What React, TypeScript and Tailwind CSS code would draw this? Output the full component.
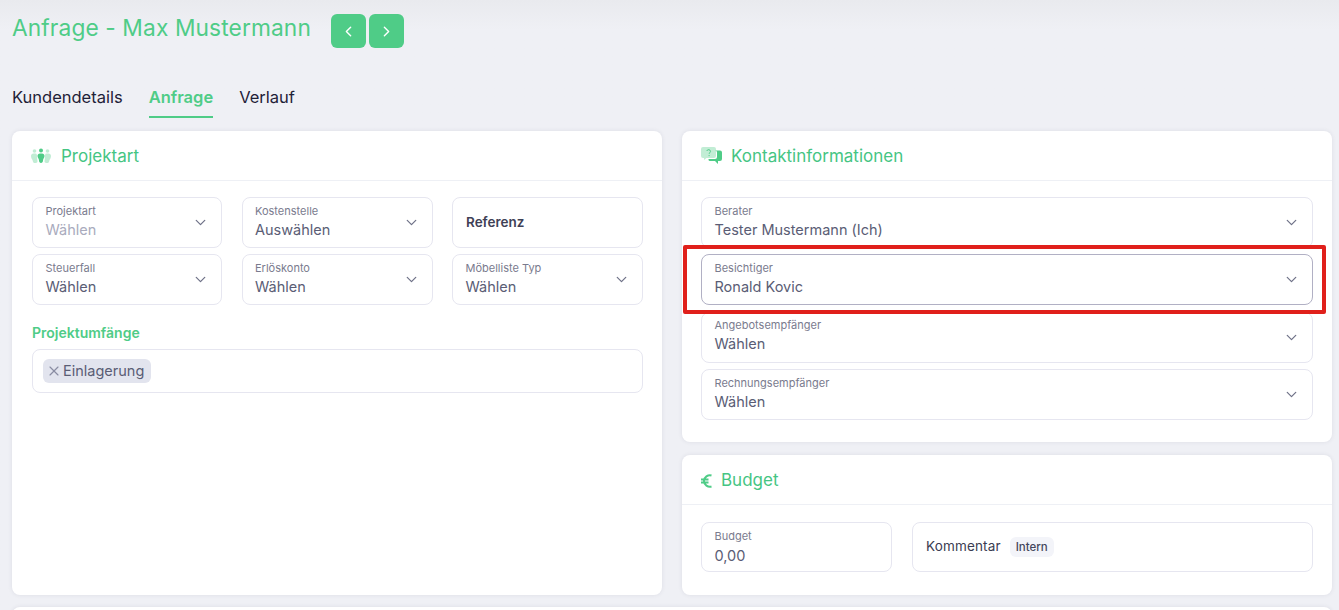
import React from 'react';
import { ChevronDown, ChevronLeft, ChevronRight, X } from 'lucide-react';

const font = { fontFamily: 'Inter, sans-serif' };

const SelectField = ({ label, value, muted, active }: { label: string; value: string; muted?: boolean; active?: boolean }) => (
  <div className={`flex h-[51px] items-center justify-between rounded-lg border bg-white pl-[12.5px] pr-[12px] ${active ? 'border-[#b1b0c4]' : 'border-[#e6e6f0]'}`}>
    <div className="flex -translate-y-[1px] flex-col">
      <span className="text-[11px] leading-[14px] text-[#7a7b8e]">{label}</span>
      <span className={`mt-[2px] text-[14.5px] leading-[20px] ${muted ? 'text-[#a9abbd]' : 'text-[#5a5d75]'}`}>{value}</span>
    </div>
    <ChevronDown size={17} strokeWidth={1.75} className="text-[#6f7288]" />
  </div>
);

const PeopleIcon = () => (
  <svg width="20" height="16" viewBox="0 0 20 16" fill="#4fcc87">
    <g opacity="0.35">
      <circle cx="3.5" cy="3" r="1.8" />
      <circle cx="16.5" cy="3" r="1.8" />
      <path d="M0 8c0-1.5 1-2.500 2.500-2.500h2C6 5.500 6 7 6 9s.5 3 .5 4.500S5 15 3.500 15 2 13 1.500 12 0 10 0 8z" />
      <path d="M20 8c0-1.500-1-2.500-2.500-2.500h-2C14 5.500 14 7 14 9s-.5 3-.5 4.500S15 15 16.500 15s1.500-2 2-3S20 10 20 8z" />
    </g>
    <circle cx="10" cy="2.500" r="2" />
    <path d="M6.500 8c0-1.500 1-2.500 2.500-2.500h2c1.500 0 2.500 1 2.500 2.500 0 2-1.500 2.500-1.500 4.500 0 1.500-.8 2.500-2 2.500s-2-1-2-2.500c0-2-1.500-2.500-1.500-4.500z" />
  </svg>
);

const ChatIcon = () => (
  <svg width="21" height="17" viewBox="0 0 21 17" fill="#4fcc87">
    <path opacity="0.35" d="M2 0h11a2 2 0 0 1 2 2v7a2 2 0 0 1-2 2H5.500L3 13v-2H2a2 2 0 0 1-2-2V2a2 2 0 0 1 2-2z" />
    <path d="M14 3.500h5a2 2 0 0 1 2 2V12a2 2 0 0 1-2 2h-2v3l-3-3H9a1.500 1.500 0 0 1-1.500-1.500V12H14a2 2 0 0 0 2-2V5.500a2 2 0 0 0-2-2z" />
    <path d="M5.800 4a1.900 1.900 0 0 1 3.700.3c0 1.300-1.400 1.400-1.400 2.500" fill="none" stroke="#4fcc87" strokeWidth="1" />
    <circle cx="8.100" cy="8.600" r="0.600" />
  </svg>
);

const EuroIcon = () => (
  <svg width="11" height="14" viewBox="0 0 11 14" fill="none" stroke="#4fcc87" strokeWidth="2" className="mt-[3px]">
    <path d="M10.500 1.500C7 .5 3 3 3 7s4 6.500 7.500 5.500M0 5.500h7.500M0 8.500h7.500" />
  </svg>
);

const Card = ({ icon, title, gap, children, className }: { icon: React.ReactNode; title: string; gap: string; children: React.ReactNode; className: string }) => (
  <section className={`rounded-lg bg-white shadow-[0_0_4px_rgba(60,60,90,0.1)] ${className}`}>
    <header className={`flex h-[50px] items-center border-b border-[#eef0f5] px-[19px] ${gap}`}>
      {icon}
      <h2 className="translate-y-[1px] text-[17px] font-normal text-[#45c583]">{title}</h2>
    </header>
    {children}
  </section>
);

export default function App() {
  return (
    <div style={font} className="relative h-[610px] w-[1339px] overflow-hidden bg-gradient-to-b from-[#e9eaee] to-[#eff0f5] to-[30px] pl-3 pr-[7px] pt-[14px]">
      <div className="flex h-[34px] items-center">
        <h1 className="-translate-y-[3px] text-[22.75px] font-normal tracking-[0.1px] text-[#4fcc87]">Anfrage - Max Mustermann</h1>
        <div className="ml-[20px] flex gap-[3px]">
          <button className="flex h-[34px] w-[35px] items-center justify-center rounded-md bg-[#4fcc87] text-white">
            <ChevronLeft size={17} />
          </button>
          <button className="flex h-[34px] w-[35px] items-center justify-center rounded-md bg-[#4fcc87] text-white">
            <ChevronRight size={17} />
          </button>
        </div>
      </div>

      <nav className="mt-[32px] flex h-[38px] gap-[26px] text-[16.5px] text-[#1f2238]">
        <span className="pt-[5px]">Kundendetails</span>
        <span className="border-b-2 border-[#4fcc87] pt-[5px] font-semibold text-[#4fcc87]">Anfrage</span>
        <span className="pt-[5px]">Verlauf</span>
      </nav>

      <div className="mt-[13px] grid grid-cols-[650px_650px] gap-5">
        <Card icon={<PeopleIcon />} title="Projektart" gap="gap-[10px]" className="h-[464px]">
          <div className="pl-5 pr-[19px] pt-[16px]">
            <div className="grid grid-cols-[190px_191px_191px] gap-x-[19.5px] gap-y-[6px]">
              <SelectField label="Projektart" value="Wählen" muted />
              <SelectField label="Kostenstelle" value="Auswählen" />
              <div className="flex h-[51px] items-center rounded-lg border border-[#e6e6f0] px-[13px] pb-[1px] text-[13.5px] font-semibold text-[#3f4156]">Referenz</div>
              <SelectField label="Steuerfall" value="Wählen" />
              <SelectField label="Erlöskonto" value="Wählen" />
              <SelectField label="Möbelliste Typ" value="Wählen" />
            </div>
            <h3 className="mt-[18px] text-sm font-semibold leading-[20px] text-[#4fcc87]">Projektumfänge</h3>
            <div className="mt-[6px] flex h-[44px] items-center rounded-lg border border-[#e6e6f0] px-[10px]">
              <span className="flex h-6 items-center gap-[1px] rounded-md bg-[#e2e4ee] pl-[3px] pr-[7px] text-[14.5px] text-[#5a5d75]">
                <X size={16} strokeWidth={1.75} className="text-[#8a8da3]" />
                Einlagerung
              </span>
            </div>
          </div>
        </Card>

        <div className="flex flex-col gap-[13px]">
          <Card icon={<ChatIcon />} title="Kontaktinformationen" gap="gap-[9px]" className="h-[311px]">
            <div className="flex flex-col gap-[6.4px] px-[19px] pt-[16px]">
              <SelectField label="Berater" value="Tester Mustermann (Ich)" />
              <SelectField label="Besichtiger" value="Ronald Kovic" active />
              <SelectField label="Angebotsempfänger" value="Wählen" />
              <SelectField label="Rechnungsempfänger" value="Wählen" />
            </div>
          </Card>
          <Card icon={<EuroIcon />} title="Budget" gap="gap-[9px]" className="h-[140px]">
            <div className="grid grid-cols-[191px_401px] gap-5 px-[19px] pt-[17px]">
              <div className="flex h-[50px] flex-col justify-center rounded-lg border border-[#e6e6f0] px-[12.5px]">
                <span className="text-[11px] leading-[14px] text-[#7a7b8e]">Budget</span>
                <span className="mt-[3px] text-[14.5px] leading-[20px] text-[#5a5d75]">0,00</span>
              </div>
              <div className="flex h-[50px] items-center gap-[9px] rounded-lg border border-[#e6e6f0] px-[13px]">
                <span className="-translate-y-[1px] text-[13.5px] font-normal tracking-[0.15px] text-[#3a3c52]">Kommentar</span>
                <span className="flex h-5 items-center rounded-md bg-[#f3f4f9] px-[6px] pt-[1px] text-[11.5px] font-medium text-[#44465c]">Intern</span>
              </div>
            </div>
          </Card>
        </div>
      </div>

      <div className="mt-3 h-10 rounded-lg bg-white shadow-[0_0_4px_rgba(60,60,90,0.1)]" />

      {/* red highlight over the Besichtiger field */}
      <div className="pointer-events-none absolute left-[683px] top-[245px] h-[69px] w-[643px] rounded-[2px] border-4 border-[#e0201b]" />
    </div>
  );
}
